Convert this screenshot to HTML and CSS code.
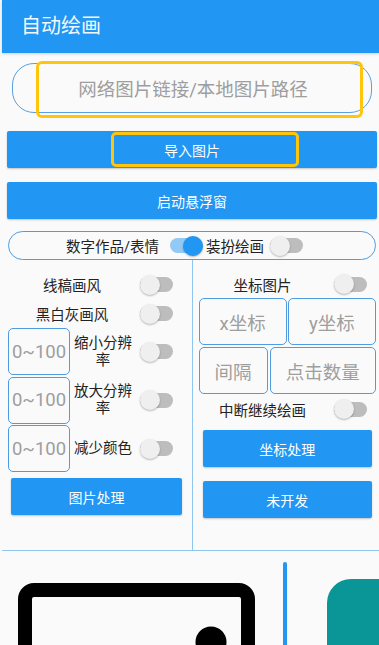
FILE: index.html
```html
<!DOCTYPE html>
<html lang="zh-CN">
<head>
<meta charset="utf-8">
<title>自动绘画</title>
<link rel="stylesheet" href="styles.css">
</head>
<body>
<div class="appbar"><span class="title">自动绘画</span></div>

<div class="url-input">网络图片链接/本地图片路径</div>
<div class="btn btn-wide btn-import">导入图片</div>
<div class="btn btn-wide btn-float">启动悬浮窗</div>

<div class="mode-pill">
  <span class="mode-label">数字作品/表情</span>
  <span class="switch on mode-switch-1"><span class="thumb"></span></span>
  <span class="mode-label mode-label-2">装扮绘画</span>
  <span class="switch mode-switch-2"><span class="thumb"></span></span>
</div>

<div class="columns">
  <div class="col col-left">
    <div class="opt-row">
      <span class="opt-label">线稿画风</span>
      <span class="switch"><span class="thumb"></span></span>
    </div>
    <div class="opt-row">
      <span class="opt-label">黑白灰画风</span>
      <span class="switch"><span class="thumb"></span></span>
    </div>
    <div class="box-row">
      <span class="field field-num">0~100</span>
      <span class="box-label">缩小分辨率</span>
      <span class="switch"><span class="thumb"></span></span>
    </div>
    <div class="box-row">
      <span class="field field-num">0~100</span>
      <span class="box-label">放大分辨率</span>
      <span class="switch"><span class="thumb"></span></span>
    </div>
    <div class="box-row">
      <span class="field field-num">0~100</span>
      <span class="box-label">减少颜色</span>
      <span class="switch"><span class="thumb"></span></span>
    </div>
    <div class="btn btn-col btn-left">图片处理</div>
  </div>
  <div class="col col-right">
    <div class="opt-row opt-row-right">
      <span class="opt-label">坐标图片</span>
      <span class="switch"><span class="thumb"></span></span>
    </div>
    <div class="field-row">
      <span class="field field-grow">x坐标</span>
      <span class="field field-grow">y坐标</span>
    </div>
    <div class="field-row field-row-2">
      <span class="field">间隔</span>
      <span class="field field-grow">点击数量</span>
    </div>
    <div class="opt-row opt-row-right opt-row-break">
      <span class="opt-label">中断继续绘画</span>
      <span class="switch"><span class="thumb"></span></span>
    </div>
    <div class="btn btn-col btn-right">坐标处理</div>
    <div class="btn btn-col btn-right btn-right-2">未开发</div>
  </div>
</div>

<div class="preview">
  <svg class="preview-icon" width="237" height="70" viewBox="0 0 237 70">
    <rect x="7" y="7" width="223" height="140" rx="9" ry="9" fill="none" stroke="#000" stroke-width="14"/>
    <circle cx="193" cy="59" r="15.5" fill="#000"/>
    <ellipse cx="101" cy="74" rx="8" ry="12" fill="#d2d2d2"/>
  </svg>
  <span class="preview-bar"></span>
  <span class="preview-card"></span>
</div>

<div class="mark mark-input"></div>
<div class="mark mark-import"></div>
</body>
</html>
```

FILE: styles.css
```css
html, body {
  margin: 0;
  padding: 0;
}
body {
  width: 379px;
  height: 645px;
  overflow: hidden;
  background: #fafafa;
  font-family: Roboto, "Noto Sans CJK SC", sans-serif;
  color: #222;
  position: relative;
}

.appbar {
  height: 53px;
  margin-left: 2px;
  background: #2196f3;
  display: flex;
  align-items: center;
  padding-left: 19px;
  box-shadow: 0 1px 3px rgba(0, 0, 0, 0.18);
}
.title {
  color: #f4f8fc;
  font-size: 20px;
  line-height: 1;
  margin-top: -1px;
}

.url-input {
  margin: 10px 7px 0 12px;
  height: 50px;
  box-sizing: border-box;
  border: 1.5px solid #5aa0dc;
  border-radius: 22px;
  display: flex;
  align-items: center;
  justify-content: center;
  color: #9e9e9e;
  font-size: 18.5px;
  padding-left: 2px;
}

.btn {
  background: #2196f3;
  color: #fff;
  font-size: 14px;
  height: 37px;
  display: flex;
  align-items: center;
  justify-content: center;
  border-radius: 2px;
  box-shadow: 0 1px 2px rgba(0, 0, 0, 0.22);
}
.btn-wide {
  margin: 0 2px 0 7px;
}
.btn-import {
  margin-top: 18px;
}
.btn-float {
  margin-top: 14px;
}

.mode-pill {
  margin: 12px 3px 0 8px;
  height: 29px;
  box-sizing: border-box;
  border: 1.5px solid #4d9de0;
  border-radius: 15px;
  display: flex;
  align-items: center;
  padding-left: 57px;
}
.mode-label {
  font-size: 14.5px;
  color: #222;
}
.mode-switch-1 {
  margin-left: 11px;
}
.mode-label-2 {
  margin-left: 3px;
}
.mode-switch-2 {
  margin-left: 6px;
}

.switch {
  width: 33px;
  height: 15px;
  border-radius: 8px;
  background: #bdbdbd;
  display: flex;
  align-items: center;
  flex: none;
}
.thumb {
  width: 20px;
  height: 20px;
  border-radius: 50%;
  background: #efefef;
  box-shadow: 0 1px 2px rgba(0, 0, 0, 0.28);
  flex: none;
}
.switch.on {
  background: #93c9f5;
  justify-content: flex-end;
}
.switch.on .thumb {
  background: #2196f3;
}

.columns {
  margin-left: 2px;
  height: 290px;
  display: flex;
  border-bottom: 1.5px solid #8fc6ef;
}
.col {
  box-sizing: border-box;
  display: flex;
  flex-direction: column;
}
.col-left {
  width: 190.5px;
  border-right: 1.5px solid #8fc6ef;
  padding: 10px 0 0 6px;
}
.col-right {
  flex: 1;
  padding: 10px 3px 0 6px;
}

.opt-row {
  height: 29px;
  display: flex;
  align-items: center;
}
.opt-label {
  width: 128px;
  text-align: center;
  font-size: 14.5px;
  color: #222;
}
.opt-row .switch {
  margin-left: 4px;
}
.opt-row-right {
  height: 28px;
}
.opt-row-right .switch {
  margin-left: 7px;
}
.opt-row-break {
  height: 30px;
  margin-top: 0;
}

.box-row {
  height: 47px;
  display: flex;
  align-items: center;
  margin-bottom: 1.5px;
}
.field {
  box-sizing: border-box;
  height: 47px;
  border: 1.5px solid #4d9de0;
  border-radius: 5px;
  display: flex;
  align-items: center;
  justify-content: center;
  color: #9e9e9e;
  font-size: 18.5px;
  padding: 0 15px;
  flex: none;
}
.field-num {
  width: 62px;
  padding: 0;
  font-size: 18.5px;
}
.box-label {
  width: 66px;
  text-align: center;
  font-size: 14.5px;
  line-height: 17px;
  color: #222;
}
.box-row .switch {
  margin-left: 4px;
}

.field-row {
  display: flex;
  gap: 1px;
}
.field-row-2 {
  margin-top: 2px;
  gap: 2px;
}
.field-grow {
  flex: 1;
}

.btn-col {
  flex: none;
}
.btn-left {
  margin: 4.5px 0 0 3px;
  width: 171px;
}
.btn-right {
  margin: 6px 4px 0 4px;
}
.btn-right-2 {
  margin-top: 14px;
}

.preview {
  display: flex;
  align-items: flex-start;
  height: 100px;
  overflow: hidden;
}
.preview-icon {
  display: block;
  margin: 31.5px 0 0 18px;
  flex: none;
}
.preview-bar {
  width: 4px;
  height: 90px;
  border-radius: 2px;
  background: #2196f3;
  margin: 10.5px 0 0 28px;
  flex: none;
}
.preview-card {
  width: 52px;
  height: 90px;
  border-radius: 24px 0 0 0;
  background: #0a9596;
  margin: 27.5px 0 0 40px;
  flex: none;
}

.mark {
  position: absolute;
  box-sizing: border-box;
  border: 3px solid #ffc40c;
  border-radius: 6px;
}
.mark-input {
  left: 36px;
  top: 61px;
  width: 327px;
  height: 57px;
}
.mark-import {
  left: 111px;
  top: 132px;
  width: 188px;
  height: 35px;
  border-radius: 5px;
}
```
